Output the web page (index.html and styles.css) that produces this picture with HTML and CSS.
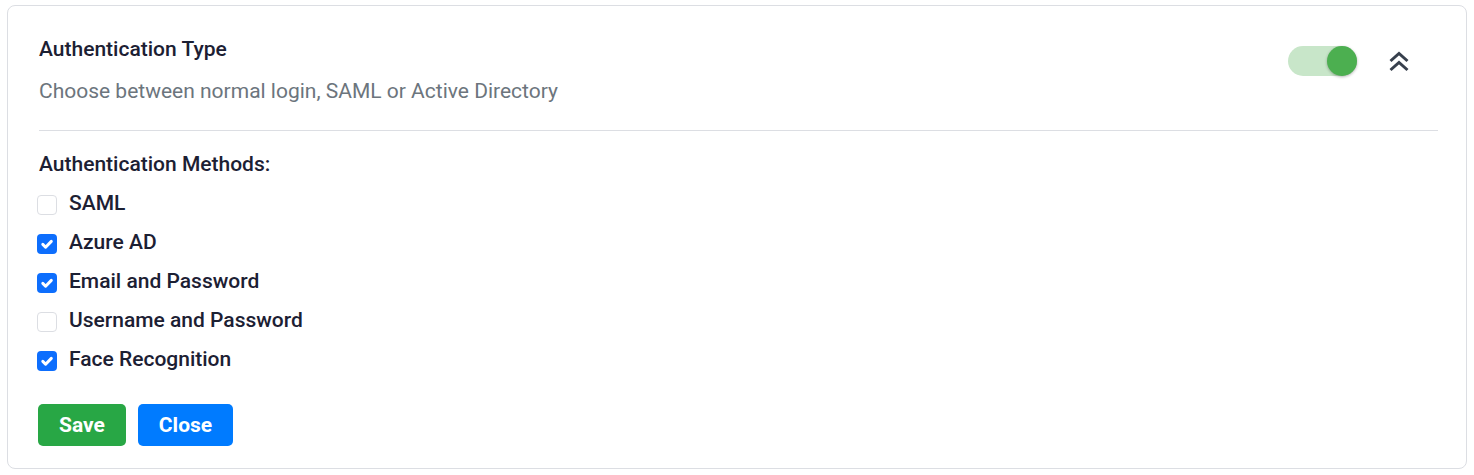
FILE: index.html
```html
<!DOCTYPE html>
<html>
<head>
<meta charset="utf-8">
<link rel="stylesheet" href="styles.css">
</head>
<body>
<div class="card">
  <div class="header">
    <div class="header-text">
      <div class="title">Authentication Type</div>
      <div class="subtitle">Choose between normal login, SAML or Active Directory</div>
    </div>
    <div class="header-actions">
      <div class="switch"><div class="knob"></div></div>
      <div class="collapse">
        <svg width="20" height="21" viewBox="0 0 20 21"><path d="M1.5 10 L10 2.5 L18.5 10 M1.5 19 L10 11.5 L18.5 19" fill="none" stroke="#37404d" stroke-width="3"/></svg>
      </div>
    </div>
  </div>
  <div class="divider"></div>
  <div class="section-label">Authentication Methods:</div>
  <div class="options">
    <label class="option"><span class="box"></span><span>SAML</span></label>
    <label class="option"><span class="box checked"><svg viewBox="0 0 20 20" width="20" height="20"><path d="M5.8 10.4 L8.6 13.2 L14.3 7.4" fill="none" stroke="#fff" stroke-width="3" stroke-linecap="round" stroke-linejoin="round"/></svg></span><span>Azure AD</span></label>
    <label class="option"><span class="box checked"><svg viewBox="0 0 20 20" width="20" height="20"><path d="M5.8 10.4 L8.6 13.2 L14.3 7.4" fill="none" stroke="#fff" stroke-width="3" stroke-linecap="round" stroke-linejoin="round"/></svg></span><span>Email and Password</span></label>
    <label class="option"><span class="box"></span><span>Username and Password</span></label>
    <label class="option"><span class="box checked"><svg viewBox="0 0 20 20" width="20" height="20"><path d="M5.8 10.4 L8.6 13.2 L14.3 7.4" fill="none" stroke="#fff" stroke-width="3" stroke-linecap="round" stroke-linejoin="round"/></svg></span><span>Face Recognition</span></label>
  </div>
  <div class="buttons">
    <button class="btn btn-save">Save</button>
    <button class="btn btn-close">Close</button>
  </div>
</div>
</body>
</html>
```
FILE: styles.css
```css
html, body {
  margin: 0;
  padding: 0;
  background: #fff;
}
body {
  padding: 5px 7px;
  font-family: Roboto, "Liberation Sans", sans-serif;
}
.card {
  width: 1460px;
  height: 464px;
  box-sizing: border-box;
  border: 1px solid #dcdee3;
  border-radius: 8px;
  padding: 30px 28px 0 31px;
}
.header {
  display: flex;
  justify-content: space-between;
  align-items: flex-start;
}
.title {
  font-size: 21px;
  font-weight: 500;
  line-height: 27px;
  color: #1c2033;
}
.subtitle {
  margin-top: 15px;
  font-size: 21px;
  line-height: 27px;
  color: #6c757d;
}
.header-actions {
  display: flex;
  align-items: center;
  gap: 32px;
  margin-top: 10px;
  margin-right: 29px;
}
.switch {
  width: 69px;
  height: 30px;
  border-radius: 15px;
  background: #c8e6c9;
  position: relative;
}
.knob {
  position: absolute;
  right: 0;
  top: 0;
  width: 30px;
  height: 30px;
  border-radius: 50%;
  background: #4caf50;
  box-shadow: 0 1px 3px rgba(0,0,0,0.3);
}
.collapse {
  width: 20px;
  display: flex;
  justify-content: center;
}
.collapse svg { display: block; }
.divider {
  margin-top: 25px;
  height: 1px;
  background: #dcdee3;
}
.section-label {
  margin-top: 20px;
  font-size: 21px;
  font-weight: 500;
  line-height: 27px;
  color: #1c2033;
}
.options {
  margin-top: 5px;
  display: flex;
  flex-direction: column;
}
.option {
  display: flex;
  align-items: center;
  gap: 12px;
  height: 39px;
  font-size: 21px;
  font-weight: 500;
  color: #1c2033;
  margin-left: -2px;
}
.box {
  width: 20px;
  height: 20px;
  box-sizing: border-box;
  border: 1px solid #dcdee3;
  border-radius: 4px;
  background: #fff;
  margin-top: 4px;
}
.box.checked {
  border: none;
  background: #0d6efd;
}
.box svg { display: block; }
.buttons {
  margin-top: 26px;
  display: flex;
  gap: 12px;
  margin-left: -1px;
}
.btn {
  height: 42px;
  border: none;
  border-radius: 5px;
  color: #fff;
  font-family: Roboto, "Liberation Sans", sans-serif;
  font-size: 21px;
  font-weight: 700;
  padding: 0;
}
.btn-save { background: #28a745; width: 88px; }
.btn-close { background: #007bff; width: 95px; }
```
